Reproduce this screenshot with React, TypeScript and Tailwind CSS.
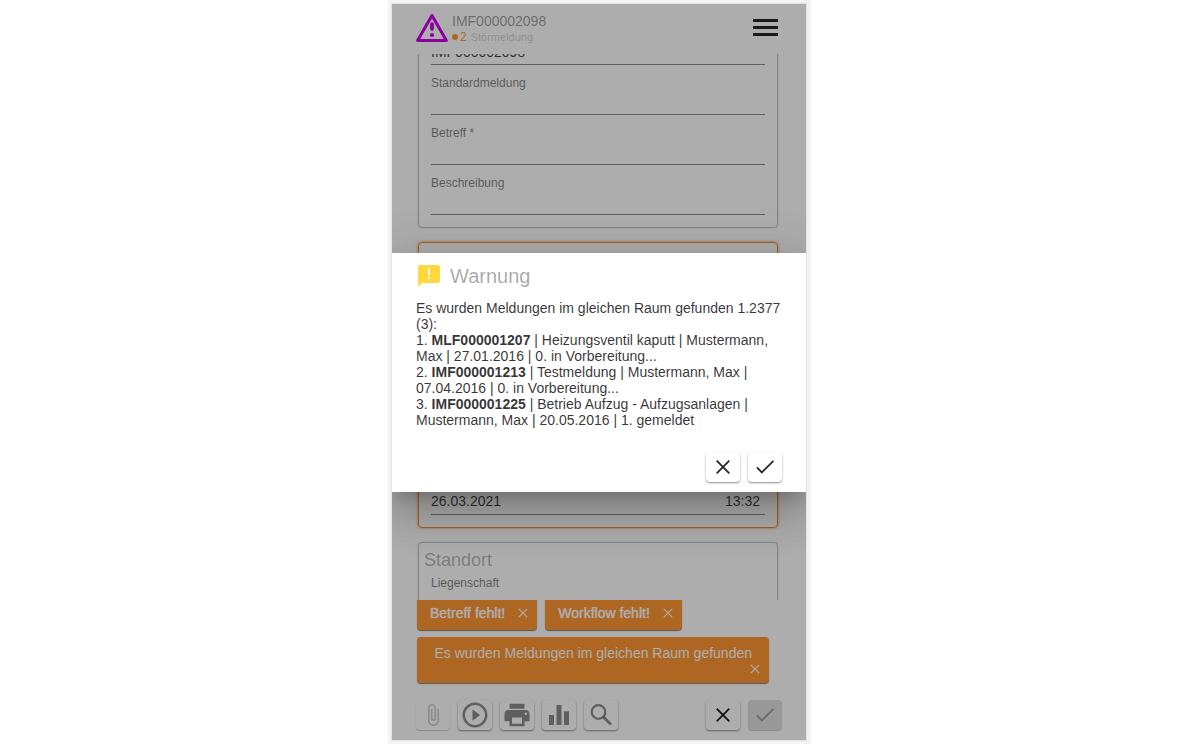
import React from "react";
import {
  MdAttachFile,
  MdEqualizer,
  MdPlayCircleOutline,
  MdPrint,
  MdSearch,
} from "react-icons/md";

function Field({ id, label, value = "" }: { id: string; label: string; value?: string }) {
  return (
    <div className="flex h-[50px] flex-col border-b border-black/45 pt-[10px]">
      <label htmlFor={id} className="h-4 text-xs leading-4 text-black/50">
        {label}
      </label>
      <input
        id={id}
        defaultValue={value}
        className="h-[22px] w-full bg-transparent text-sm text-black/75 outline-none"
      />
    </div>
  );
}

function Card({
  title,
  active = false,
  children,
}: {
  title?: string;
  active?: boolean;
  children: React.ReactNode;
}) {
  return (
    <section
      className={
        active
          ? "flex min-h-[286px] flex-col justify-end rounded border border-[#f09030] px-3 pb-3 shadow-[0_0_3px_#ff9933]"
          : "rounded border border-black/22 px-3 pb-3 shadow-[0_0_2px_rgba(0,0,0,0.2)]"
      }
    >
      {!active && (
        <h2 className="-ml-[7px] h-[22px] pt-[5px] text-lg leading-6 text-black/30">{title}</h2>
      )}
      {children}
    </section>
  );
}

function IconButton({
  label,
  disabled = false,
  tone = "text-black/45",
  children,
}: {
  label: string;
  disabled?: boolean;
  tone?: string;
  children: React.ReactNode;
}) {
  return (
    <button
      type="button"
      aria-label={label}
      disabled={disabled}
      className={`flex h-[30px] w-[34px] items-center justify-center rounded ${disabled ? "shadow-[0_1px_1px_rgba(0,0,0,0.2)]" : "shadow-[0_1px_2px_rgba(0,0,0,0.45)]"} ${tone}`}
    >
      {children}
    </button>
  );
}

function CloseIcon({ size = 24 }: { size?: number }) {
  return (
    <svg width={size} height={size} viewBox="0 0 24 24" fill="none" aria-hidden="true">
      <path d="M5.7 5.7 18.3 18.3M18.3 5.7 5.7 18.3" stroke="currentColor" strokeWidth="1.8" />
    </svg>
  );
}

function CheckIcon() {
  return (
    <svg width="24" height="24" viewBox="0 0 24 24" fill="none" aria-hidden="true">
      <path d="M3.9 12.4 8.9 17.4 20.4 5.9" stroke="currentColor" strokeWidth="1.8" />
    </svg>
  );
}

function FeedbackIcon() {
  return (
    <svg width="26" height="26" viewBox="0 0 26 26" aria-hidden="true">
      <path
        d="M4.2 2H21.8Q24 2 24 4.2V17.8Q24 20 21.8 20H6L2 24V4.2Q2 2 4.2 2Z"
        fill="#ffd740"
      />
      <path d="M12.2 5.5h1.8v6.5h-1.8zM12.2 14h1.8v2h-1.8z" fill="white" />
    </svg>
  );
}

function Message({ text }: { text: string }) {
  return (
    <div className="flex h-[30px] items-center gap-[10px] rounded-b bg-[#ff9933] pr-[6px] pb-1 pl-[13px] text-sm text-white shadow-[0_1px_1px_rgba(0,0,0,0.5)]">
      <span className="text-shadow-[0_0_1px_white]">{text}</span>
      <button type="button" aria-label="Meldung schließen">
        <CloseIcon size={16} />
      </button>
    </div>
  );
}

function WarningIcon() {
  return (
    <svg width="32" height="30" viewBox="0 0 32 30" fill="none" aria-hidden="true">
      <path d="M16 2.6 30.4 27.4H1.6Z" stroke="#cc00ee" strokeWidth="3" strokeLinejoin="round" />
      <path d="M16 11.2v4.6" stroke="#cc00ee" strokeWidth="3.8" strokeLinecap="round" />
      <circle cx="16" cy="22" r="2.1" fill="#cc00ee" />
    </svg>
  );
}

const reports = [
  { id: "MLF000001207", text: "Heizungsventil kaputt | Mustermann, Max | 27.01.2016 | 0. in Vorbereitung..." },
  { id: "IMF000001213", text: "Testmeldung | Mustermann, Max | 07.04.2016 | 0. in Vorbereitung..." },
  { id: "IMF000001225", text: "Betrieb Aufzug - Aufzugsanlagen | Mustermann, Max | 20.05.2016 | 1. gemeldet" },
];

export default function App() {
  return (
    <div className="flex h-screen justify-center bg-white pr-px font-['Liberation_Sans',Arial,sans-serif]">
      <div className="flex w-full max-w-[423px] bg-[#f3f3f3] pt-1 pr-[5px] pb-1 pl-1">
        <div className="relative flex min-w-0 flex-1 flex-col overflow-hidden bg-white shadow-[0_0_0_1px_#e2e2e2]">
          <header className="flex h-[50px] shrink-0 items-start justify-between pt-[9px] pr-7 pl-6">
            <div className="flex gap-1">
              <WarningIcon />
              <div>
                <h1 className="text-sm leading-4 text-black/40">IMF000002098</h1>
                <p className="flex items-center gap-1 text-[11px] leading-4 text-black/20">
                  <span className="flex items-center gap-[2px] text-xs text-[#ff9933]">
                    <span className="size-[6px] rounded-full bg-[#ff9933]" />2
                  </span>
                  Störmeldung
                </p>
              </div>
            </div>
            <button type="button" aria-label="Menü" className="flex flex-col gap-1 pt-[6px]">
              <span className="h-[3px] w-[25px] bg-black/85" />
              <span className="h-[3px] w-[25px] bg-black/85" />
              <span className="h-[3px] w-[25px] bg-black/85" />
            </button>
          </header>

          <main className="min-h-0 flex-1 overflow-hidden pr-7 pl-[26px]">
            <div className="-mt-[62px] flex flex-col gap-[14px]">
              <Card>
                <Field id="nummer" label="" value="IMF000002098" />
                <Field id="standard" label="Standardmeldung" />
                <Field id="betreff" label="Betreff *" />
                <Field id="beschreibung" label="Beschreibung" />
              </Card>
              <Card active>
                <div className="flex h-[26px] items-start justify-between border-b border-black/45 pr-[5px] text-sm text-black/75">
                  <input
                    aria-label="Datum"
                    defaultValue="26.03.2021"
                    className="h-[24px] w-24 bg-transparent outline-none"
                  />
                  <input
                    aria-label="Uhrzeit"
                    defaultValue="13:32"
                    className="h-[24px] w-12 bg-transparent text-right outline-none"
                  />
                </div>
              </Card>
              <Card title="Standort">
                <Field id="liegenschaft" label="Liegenschaft" />
              </Card>
            </div>
          </main>

          <div className="flex shrink-0 flex-col gap-[7px] pr-[37px] pl-[25px]">
            <div className="flex gap-2">
              <Message text="Betreff fehlt!" />
              <Message text="Workflow fehlt!" />
            </div>
            <div className="flex h-[46px] flex-col items-end rounded bg-[#ff9933] pt-2 pr-[6px] pl-[13px] text-sm leading-4 text-white shadow-[0_1px_1px_rgba(0,0,0,0.5)]">
              <span className="pr-[11px]">Es wurden Meldungen im gleichen Raum gefunden</span>
              <button type="button" aria-label="Meldung schließen">
                <CloseIcon size={16} />
              </button>
            </div>
          </div>

          <footer className="flex shrink-0 justify-between pt-[17px] pr-6 pb-[10px] pl-6">
            <div className="flex gap-2">
              <IconButton label="Anhang" disabled tone="text-black/20">
                <MdAttachFile size={24} />
              </IconButton>
              <IconButton label="Start">
                <MdPlayCircleOutline size={30} />
              </IconButton>
              <IconButton label="Drucken">
                <MdPrint size={30} />
              </IconButton>
              <IconButton label="Auswertung">
                <MdEqualizer size={30} />
              </IconButton>
              <IconButton label="Suchen">
                <svg width="28" height="28" viewBox="0 0 28 28" fill="none" aria-hidden="true">
                  <circle cx="11.5" cy="11" r="6.8" stroke="currentColor" strokeWidth="2.2" />
                  <path d="M16.5 16 24 23.5" stroke="currentColor" strokeWidth="2.6" />
                </svg>
              </IconButton>
            </div>
            <div className="flex gap-2">
              <IconButton label="Verwerfen" tone="text-black/90">
                <CloseIcon />
              </IconButton>
              <IconButton label="Speichern" disabled tone="bg-black/12 text-black/30">
                <CheckIcon />
              </IconButton>
            </div>
          </footer>

          <div className="absolute inset-0 flex items-center bg-black/32">
            <div
              role="dialog"
              aria-labelledby="dialog-title"
              className="w-full bg-white px-6 pt-[10px] pb-[10px] shadow-[0_11px_15px_-7px_rgba(0,0,0,0.2),0_24px_38px_3px_rgba(0,0,0,0.14),0_9px_46px_8px_rgba(0,0,0,0.12)]"
            >
              <div className="flex items-center gap-2">
                <FeedbackIcon />
                <h2 id="dialog-title" className="text-xl leading-[26px] text-black/35">
                  Warnung
                </h2>
              </div>
              <div className="pt-[11px] text-sm leading-4 text-black/80">
                <p>Es wurden Meldungen im gleichen Raum gefunden 1.2377 (3):</p>
                <ol>
                  {reports.map((report, index) => (
                    <li key={report.id}>
                      {`${index + 1}. `}
                      <b>{report.id}</b>
                      {` | ${report.text}`}
                    </li>
                  ))}
                </ol>
              </div>
              <div className="flex justify-end gap-2 pt-6">
                <IconButton label="Abbrechen" tone="text-black/85">
                  <CloseIcon />
                </IconButton>
                <IconButton label="Bestätigen" tone="text-black/85">
                  <CheckIcon />
                </IconButton>
              </div>
            </div>
          </div>
        </div>
      </div>
    </div>
  );
}
